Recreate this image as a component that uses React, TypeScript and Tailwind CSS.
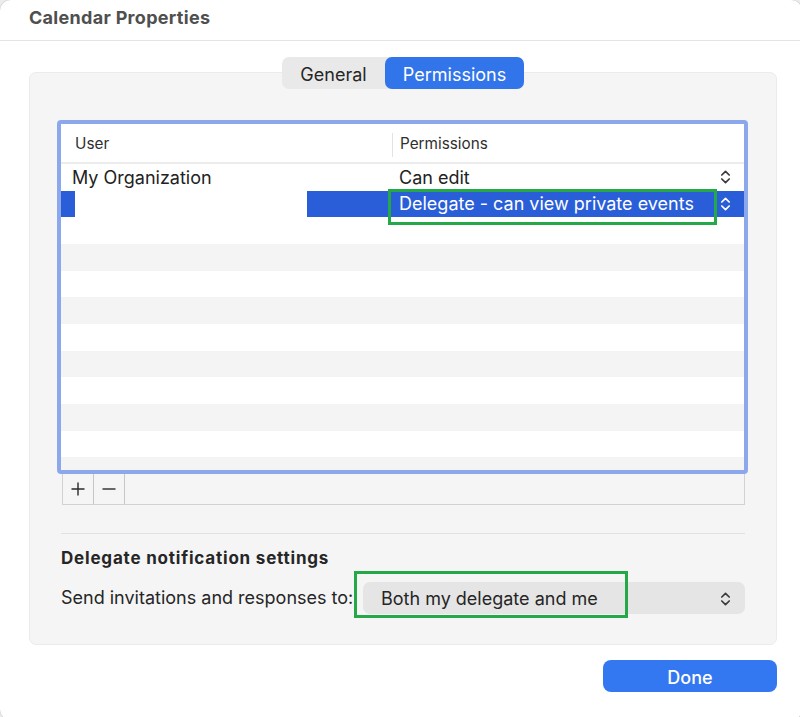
import React from 'react'

// small up/down chevron used by macOS popup buttons
const UpDown = ({ color = '#3a3a3a' }: { color?: string }) => (
  <svg width="11" height="16" viewBox="0 0 11 16" fill="none">
    <path d="M1.8 6 L5.5 2.3 L9.2 6" stroke={color} strokeWidth="1.7" strokeLinecap="round" strokeLinejoin="round" />
    <path d="M1.8 10 L5.5 13.7 L9.2 10" stroke={color} strokeWidth="1.7" strokeLinecap="round" strokeLinejoin="round" />
  </svg>
)

const emptyRows = Array.from({ length: 10 })

const App = () => {
  return (
    <div className="w-[800px] h-[717px] bg-[#ececec] font-['Inter','Liberation_Sans',sans-serif] overflow-hidden">
      <div className="w-[804px] h-[722px] bg-white rounded-[12px] border border-[#d4d4d4] -mt-px -ml-px relative">
        {/* title bar */}
        <div className="h-[41px] border-b border-[#e4e4e4] flex items-center pl-[29px] pb-[5px]">
          <span className="text-[18px] font-bold text-[#4f4f4f] tracking-[0.3px]">Calendar Properties</span>
        </div>

        {/* tabs */}
        <div className="relative z-10 mt-[16px] w-[806px] flex justify-center">
          <div className="flex h-[32px] rounded-[7px] bg-[#e9e9e9]">
            <div className="w-[103px] flex items-center justify-center text-[18px] text-[#262626] pt-[2px]">General</div>
            <div className="w-[139px] flex items-center justify-center text-[18px] text-white bg-[#3274ea] rounded-[7px] pt-[2px]">Permissions</div>
          </div>
        </div>

        {/* main panel */}
        <div className="-mt-[17px] ml-[29px] w-[748px] h-[573px] bg-[#f5f5f5] border border-[#ebebeb] rounded-[7px] pt-[47px] pl-[27px]">
          {/* permissions table */}
          <div className="w-[691px] h-[354px] border-[4px] border-[#8ba8ed] rounded-[4px] bg-white overflow-hidden">
            <div className="h-[40px] border-b-2 border-[#ececec] flex items-center pt-[3px]">
              <div className="w-[331px] pl-[14px] text-[15.3px] text-[#2f2f2f]">User</div>
              <div className="h-[24px] w-px bg-[#e3e3e3]" />
              <div className="pl-[7px] text-[15.3px] text-[#2f2f2f]">Permissions</div>
            </div>

            <div className="h-[26.67px] flex items-center text-[18px] text-[#222]">
              <div className="w-[331px] pl-[11px]">My Organization</div>
              <div className="flex-1 pl-[7px]">Can edit</div>
              <div className="pr-[13px] flex items-center"><UpDown /></div>
            </div>

            <div className="h-[26.67px] flex items-center text-[18px] text-white bg-[#2a5ed8] relative">
              <div className="w-[331px] h-full flex items-center">
                <div className="ml-[14px] w-[232px] h-[26px] bg-white" />
              </div>
              <div className="flex-1 pl-[7px]">Delegate - can view private events</div>
              <div className="pr-[13px] flex items-center"><UpDown color="#ffffff" /></div>
            </div>

            {emptyRows.map((_, i) => (
              <div key={i} className={`h-[26.67px] ${i % 2 === 1 ? 'bg-[#f4f4f4]' : 'bg-white'}`} />
            ))}
          </div>

          {/* add / remove bar */}
          <div className="ml-[5px] w-[683px] h-[31px] border-x border-b border-[#d2d2d2] flex">
            <button className="w-[31px] h-full border-r border-[#c6c6c6] flex items-center justify-center">
              <svg width="16" height="16" viewBox="0 0 16 16"><path d="M8 1.5 V14.5 M1.5 8 H14.5" stroke="#2a2a2a" strokeWidth="1.4" /></svg>
            </button>
            <button className="w-[31px] h-full border-r border-[#c6c6c6] flex items-center justify-center">
              <svg width="16" height="16" viewBox="0 0 16 16"><path d="M1.5 8 H14.5" stroke="#2a2a2a" strokeWidth="1.4" /></svg>
            </button>
          </div>

          <div className="mt-[28px] ml-[4px] w-[684px] h-px bg-[#e1e1e1]" />

          <div className="ml-[4px] mt-[12px] text-[17px] font-bold text-[#262626] tracking-[0.8px]">Delegate notification settings</div>

          <div className="ml-[4px] mt-[10px] flex items-center">
            <span className="text-[18px] text-[#262626] w-[302px]">Send invitations and responses to:</span>
            <div className="w-[382px] h-[32px] bg-[#e5e5e5] rounded-[7px] flex items-center pl-[18px] pr-[14px] pt-[2px]">
              <span className="flex-1 text-[18px] text-[#262626]">Both my delegate and me</span>
              <UpDown />
            </div>
          </div>
        </div>

        <div className="mt-[15px] ml-[603px] w-[174px] h-[32px] rounded-[8px] bg-[#3478f1] flex items-center justify-center text-[18px] font-medium text-white pt-[2px]">
          Done
        </div>

        {/* highlight boxes */}
        <div className="absolute left-[388px] top-[189px] w-[329px] h-[36px] border-[3px] border-[#25a848]" />
        <div className="absolute left-[354px] top-[571px] w-[274px] h-[47px] border-[3px] border-[#25a848]" />
      </div>
    </div>
  )
}

export default App
